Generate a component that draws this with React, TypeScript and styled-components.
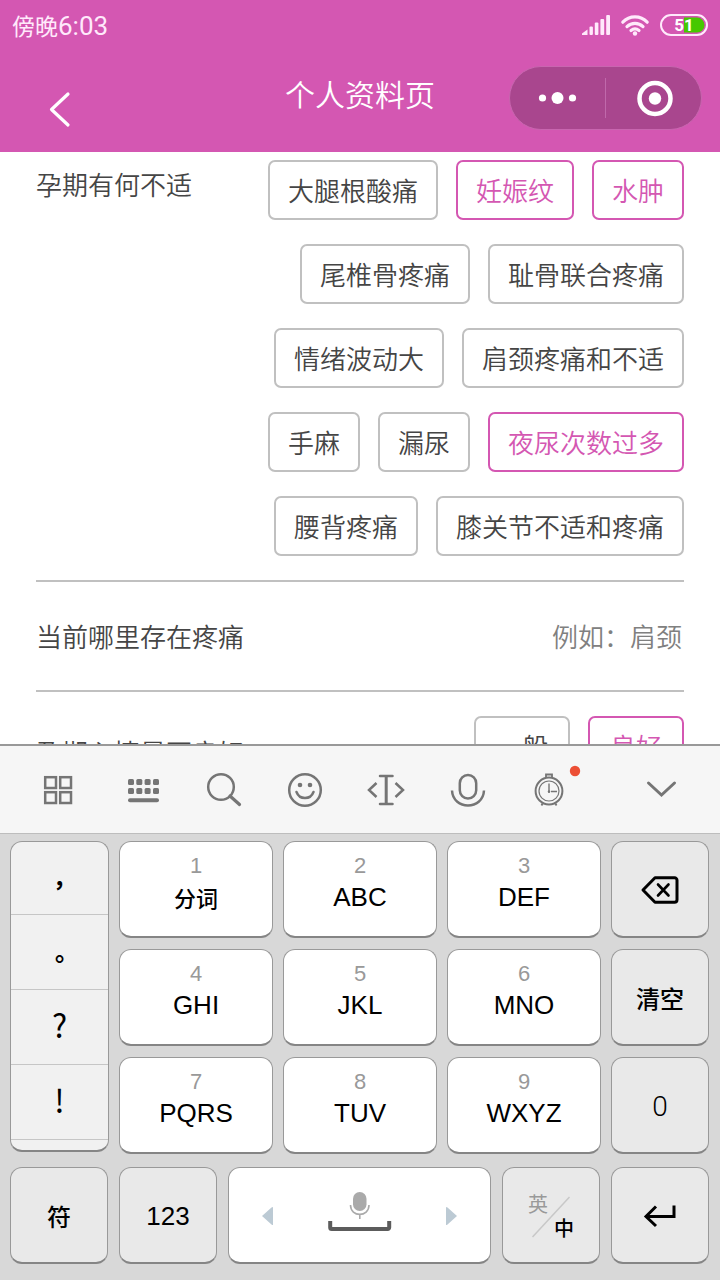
import React, { useState } from "react";
import styled, { createGlobalStyle, css } from "styled-components";

const PINK = "#d457b2";
const CJK = `"Noto Sans CJK SC", sans-serif`;

const GlobalStyle = createGlobalStyle`
  * { box-sizing: border-box; }
  body { margin: 0; background: #fff; font-family: ${CJK}; }
  button { font: inherit; color: inherit; margin: 0; padding: 0; border: 0; background: none; cursor: pointer; }
  svg { display: block; flex: none; overflow: visible; }
`;

const Screen = styled.div`
  display: flex;
  flex-direction: column;
  height: 100vh;
  overflow: hidden;
`;

/* ---------- header ---------- */

const Header = styled.header`
  flex: none;
  background: ${PINK};
  color: #fff;
`;

const StatusBar = styled.div`
  display: flex;
  align-items: center;
  justify-content: space-between;
  height: 52px;
  padding: 0 12px;
  color: #ffe9fb;
`;

const Clock = styled.span`
  padding-top: 2px;
  font-family: Roboto, ${CJK};
  font-size: 26px;
  line-height: 36px;
`;

const DayPart = styled.span`
  font-size: 23px;
`;

const StatusIcons = styled.div`
  display: flex;
  align-items: center;
  gap: 11px;
  padding-bottom: 2px;
`;

const Nav = styled.nav`
  display: grid;
  grid-template-columns: 1fr auto 1fr;
  align-items: start;
  height: 100px;
  padding: 14px 18px 0;
`;

const BackButton = styled.button`
  display: flex;
  align-items: center;
  justify-content: center;
  width: 84px;
  height: 86px;
`;

const Title = styled.h1`
  margin: 0;
  font-size: 30px;
  font-weight: 350;
  line-height: 54px;
`;

const Capsule = styled.div`
  display: flex;
  align-items: center;
  justify-self: end;
  width: 193px;
  height: 64px;
  border: 1px solid #c866af;
  border-radius: 32px;
  background: #a9468e;
`;

const CapsuleButton = styled.button`
  display: flex;
  flex: 1;
  align-items: center;
  justify-content: center;
  height: 100%;
`;

const CapsuleDivider = styled.span`
  width: 1px;
  height: 40px;
  background: #c069ab;
`;

/* ---------- form ---------- */

const Form = styled.main`
  flex: 1;
  min-height: 0;
  overflow: hidden;
  padding: 0 36px;
  color: #454545;
  font-size: 26px;
  font-weight: 350;
`;

const Section = styled.section<{ $top: number }>`
  display: flex;
  align-items: flex-start;
  justify-content: space-between;
  padding: ${(p) => p.$top}px 0 24px;
  border-bottom: 2px solid #c0c0c0;
`;

const Label = styled.h2<{ $top: number }>`
  flex: none;
  margin: 0;
  padding-top: ${(p) => p.$top}px;
  font-size: 26px;
  font-weight: 350;
  line-height: 36px;
`;

const ChipGroup = styled.div`
  display: flex;
  flex-direction: column;
  gap: 24px;
`;

const ChipRow = styled.div`
  display: flex;
  justify-content: flex-end;
  gap: 18px;
`;

const Chip = styled.button<{ $on: boolean; $wide?: boolean }>`
  height: 60px;
  padding: 0 ${(p) => (p.$wide ? 20 : 18)}px 2px;
  border: 2px solid ${(p) => (p.$on ? PINK : "#c0c0c0")};
  border-radius: 7px;
  background: #fff;
  color: ${(p) => (p.$on ? PINK : "#454545")};
  white-space: nowrap;
`;

const FieldRow = styled.div`
  display: flex;
  align-items: center;
  height: 110px;
  border-bottom: 2px solid #c0c0c0;
`;

const FieldLabel = styled.label`
  flex: none;
  line-height: 36px;
`;

const FieldInput = styled.input`
  flex: 1;
  min-width: 0;
  height: 60px;
  padding: 0 2px 2px 0;
  border: 0;
  outline: 0;
  background: none;
  font: inherit;
  color: #454545;
  text-align: right;
  &::placeholder { color: #808080; opacity: 1; }
`;

/* ---------- keyboard ---------- */

const Keyboard = styled.section`
  flex: none;
  border-top: 2px solid #999;
  background: #d8d8d8;
  color: #000;
`;

const Toolbar = styled.div`
  display: flex;
  height: 88px;
  padding: 0 18px;
  border-bottom: 1px solid #bdbdbd;
  background: #f6f6f6;
`;

const ToolButton = styled.button`
  display: flex;
  flex: 1;
  align-items: center;
  justify-content: center;
`;

const ToolbarGap = styled.span`
  width: 30px;
`;

const Keys = styled.div`
  display: grid;
  gap: 13px;
  padding: 7px 11px 16px 10px;
`;

const KeyGrid = styled.div`
  display: grid;
  grid-template-columns: 99px 1fr 1fr 1fr 98px;
  grid-auto-rows: 97px;
  gap: 11px 10px;
`;

const BottomRow = styled.div`
  display: flex;
  gap: 11px;
`;

const keyFace = css`
  border: 1px solid #999;
  border-bottom: 2px solid #858585;
  border-radius: 12px;
`;

const Key = styled.button<{ $tone?: "white" | "grey" }>`
  ${keyFace}
  display: flex;
  flex-direction: column;
  align-items: center;
  justify-content: center;
  height: 97px;
  padding-top: 2px;
  background: ${(p) => (p.$tone === "white" ? "#fff" : "#e9e9e9")};
  font-family: "Liberation Sans", ${CJK};
  font-size: 26px;
`;

const LetterKey = styled(Key)`
  padding: 0 0 10px;
`;

const FixedKey = styled(Key)`
  flex: none;
  width: 98px;
`;

const Digit = styled.span`
  color: #999;
  font-size: 22px;
  line-height: 26px;
`;

const Letters = styled.span`
  height: 36px;
  font-size: 26px;
  line-height: 36px;
`;

const HanText = styled.span<{ $size: number }>`
  font-family: ${CJK};
  font-size: ${(p) => p.$size}px;
  font-weight: 500;
  line-height: 36px;
`;

const Zero = styled.span`
  font-family: Roboto, sans-serif;
  font-size: 28px;
  font-weight: 300;
`;

const PunctuationList = styled.div`
  ${keyFace}
  grid-row: 1 / span 3;
  display: flex;
  flex-direction: column;
  height: 311px;
  overflow: hidden;
  background: #f1f1f1;
`;

const PunctuationKey = styled.button<{ $latin?: boolean }>`
  flex: none;
  height: 75px;
  padding: ${(p) => (p.$latin ? "0 0 6px" : "12px 0 0")};
  border-bottom: 1px solid #c6c6c6;
  font-family: "Noto Sans CJK TC", sans-serif;
  font-size: ${(p) => (p.$latin ? 32 : 24)}px;
  font-weight: ${(p) => (p.$latin ? 400 : 700)};
  line-height: 36px;
  &:first-child { height: 73px; }
`;

const SpaceKey = styled(Key)`
  flex: 1;
  flex-direction: row;
  justify-content: space-between;
  padding: 2px 32px 0;
`;

const LanguageKey = styled(FixedKey)`
  display: grid;
  grid-template-columns: 26px 26px;
  grid-template-rows: 24px 24px;
  align-content: center;
  justify-content: center;
  place-items: center;
  position: relative;
`;

const LanguageName = styled.span<{ $active?: boolean }>`
  grid-area: ${(p) => (p.$active ? "2 / 2" : "1 / 1")};
  color: ${(p) => (p.$active ? "#000" : "#999")};
  font-family: ${CJK};
  font-size: 20px;
  font-weight: ${(p) => (p.$active ? 500 : 400)};
  line-height: 24px;
`;

const LanguageSlash = styled.svg`
  position: absolute;
  top: 28px;
  left: 28px;
`;

/* ---------- icons ---------- */

const SignalIcon = () => (
  <svg width="28" height="20" viewBox="0 0 28 20" fill="currentColor">
    <path d="M0 20v-1.500L5.500 14.500V20z" />
    <rect x="7.500" y="11.500" width="3.400" height="8.500" rx="1" />
    <rect x="12.800" y="7.500" width="3.600" height="12.500" rx="1" />
    <rect x="18.400" y="4" width="3.800" height="16" rx="1" />
    <rect x="24.200" y="0" width="3.800" height="20" rx="1" />
  </svg>
);

const WifiIcon = () => (
  <svg width="28" height="21" viewBox="0 0 28 21" fill="none" stroke="currentColor" strokeWidth="3.200" strokeLinecap="round">
    <path d="M1.800 7.200C8.500.2 19.500.2 26.200 7.200" />
    <path d="M6 11.600c4.600-4.400 11.400-4.400 16 0" />
    <path d="M10 15.500c2.400-2 5.600-2 8 0" />
    <circle cx="14" cy="18.500" r="2.200" fill="currentColor" stroke="none" />
  </svg>
);

const BatteryIcon = () => (
  <svg width="48" height="22" viewBox="0 0 48 22">
    <path d="M24 3.500h13a7.500 7.500 0 0 1 0 15H24z" fill="#46c800" />
    <rect x="1" y="1" width="46" height="20" rx="10" fill="none" stroke="#ffe9fb" strokeWidth="2" />
    <text x="24" y="17" textAnchor="middle" fill="#fff" fontFamily="Roboto, sans-serif" fontSize="17" fontWeight="700">51</text>
  </svg>
);

const BackIcon = () => (
  <svg width="22" height="36" viewBox="0 0 22 36" fill="none" stroke="#fff" strokeWidth="3.200" strokeLinecap="round" strokeLinejoin="round">
    <path d="M19 3L2.500 18.500l16.500 15.500" />
  </svg>
);

const MoreIcon = () => (
  <svg width="38" height="14" viewBox="0 0 38 14" fill="#fff">
    <circle cx="3.500" cy="7" r="3.600" />
    <circle cx="18.500" cy="7" r="6" />
    <circle cx="33.500" cy="7" r="3.600" />
  </svg>
);

const TargetIcon = () => (
  <svg width="36" height="36" viewBox="0 0 36 36">
    <circle cx="19" cy="18.500" r="15.500" fill="none" stroke="#fff" strokeWidth="4.500" />
    <circle cx="19" cy="18.500" r="6.200" fill="#fff" />
  </svg>
);

const ToolSvg = ({ children }: { children: React.ReactNode }) => (
  <svg width="54" height="54" viewBox="0 0 54 54" fill="none" stroke="#757575" strokeWidth="2.500">
    {children}
  </svg>
);

const GridIcon = () => (
  <ToolSvg>
    <rect x="13.200" y="14.200" width="10.800" height="10.800" />
    <rect x="28.200" y="14.200" width="10.800" height="10.800" />
    <rect x="13.200" y="29.200" width="10.800" height="10.800" />
    <rect x="28.200" y="29.200" width="10.800" height="10.800" />
  </ToolSvg>
);

const KeyboardIcon = () => (
  <ToolSvg>
    {[16, 25].map((y) =>
      [14, 22.300, 30.600, 39].map((x) => (
        <rect key={`${x}-${y}`} x={x} y={y} width="6" height="6" rx="1.500" fill="#757575" stroke="none" />
      ))
    )}
    <path d="M16 37.200h27" strokeWidth="4" strokeLinecap="round" />
  </ToolSvg>
);

const SearchIcon = () => (
  <ToolSvg>
    <circle cx="26" cy="24" r="12.800" />
    <path d="M35 33l9.500 8.500" strokeWidth="3.200" strokeLinecap="round" />
  </ToolSvg>
);

const SmileIcon = () => (
  <ToolSvg>
    <circle cx="28" cy="27" r="15.800" />
    <circle cx="23" cy="22" r="2.300" fill="#757575" stroke="none" />
    <circle cx="33" cy="22" r="2.300" fill="#757575" stroke="none" />
    <path d="M19.500 29c3 8 14 8 17 0" strokeLinecap="round" />
  </ToolSvg>
);

const CursorIcon = () => (
  <ToolSvg>
    <path d="M21 13h12.500M21 41h12.500" strokeLinecap="round" />
    <path d="M27.200 13v28" strokeWidth="3" />
    <path d="M17.500 20l-7.500 7 7.500 7M36.500 20l7.500 7-7.500 7" />
  </ToolSvg>
);

const MicIcon = () => (
  <ToolSvg>
    <rect x="18.800" y="12" width="16.400" height="23.500" rx="8.200" />
    <path d="M11 27.500c1 20 31 20 32 0" />
  </ToolSvg>
);

const ClockIcon = () => (
  <ToolSvg>
    <circle cx="27" cy="28" r="13.400" strokeWidth="2" />
    <circle cx="27" cy="28" r="10" strokeWidth="1.200" />
    <path d="M24 14v-2.500h6V14M20.500 40.500L19.500 42.500M33.500 40.500L34.500 42.500" strokeWidth="1.800" />
    <path d="M27 20.500V30M29 28.500h6" strokeWidth="1.400" />
    <circle cx="27" cy="28.500" r="1.200" fill="#757575" stroke="none" />
    <circle cx="53" cy="8" r="5.200" fill="#ec4f35" stroke="none" />
  </ToolSvg>
);

const CollapseIcon = () => (
  <ToolSvg>
    <path d="M14.500 20L27.500 32 40.500 20" strokeWidth="3" strokeLinecap="round" />
  </ToolSvg>
);

const BackspaceIcon = () => (
  <svg width="38" height="28" viewBox="0 0 38 28" fill="none" stroke="#000" strokeWidth="3" strokeLinejoin="round" strokeLinecap="round">
    <path d="M14 1.800h19.500a2.500 2.500 0 0 1 2.500 2.500v19.400a2.500 2.500 0 0 1-2.500 2.500H14L2 14z" />
    <path d="M17 8.500l10.500 11M27.500 8.500L17 19.500" strokeWidth="2.600" />
  </svg>
);

const EnterIcon = () => (
  <svg width="32" height="24" viewBox="0 0 32 24" fill="none" stroke="#000" strokeWidth="3">
    <path d="M30 1.500v11H3" />
    <path d="M12 2.500l-10 10 10 9.500" />
  </svg>
);

const SpaceIcon = () => (
  <svg width="64" height="48" viewBox="0 0 64 48" fill="none">
    <rect x="25" y="0" width="13.500" height="19" rx="6.700" fill="#aaa" />
    <path d="M22.500 13c0 12.500 18.500 12.500 18.500 0M31.800 22.500v4.500" stroke="#aaa" strokeWidth="1.600" />
    <path d="M2.200 29v6.500a1.500 1.500 0 0 0 1.500 1.500h56a1.500 1.500 0 0 0 1.500-1.500V29" stroke="#5c5c5c" strokeWidth="4" />
  </svg>
);

const TriangleIcon = ({ right }: { right?: boolean }) => (
  <svg width="13" height="20" viewBox="0 0 13 20" fill="#bccad4">
    <path d={right ? "M1 1.500q0-1 1.500 0L12 10 2.500 18.500q-1.500 1-1.500 0z" : "M12 1.500q0-1-1.500 0L1 10l9.500 8.500q1.500 1 1.500 0z"} />
  </svg>
);

/* ---------- data ---------- */

const symptomRows = [
  ["大腿根酸痛", "妊娠纹", "水肿"],
  ["尾椎骨疼痛", "耻骨联合疼痛"],
  ["情绪波动大", "肩颈疼痛和不适"],
  ["手麻", "漏尿", "夜尿次数过多"],
  ["腰背疼痛", "膝关节不适和疼痛"],
];

const letterKeys = [
  ["1", "分词"], ["2", "ABC"], ["3", "DEF"],
  ["4", "GHI"], ["5", "JKL"], ["6", "MNO"],
  ["7", "PQRS"], ["8", "TUV"], ["9", "WXYZ"],
];

const sideKeys = [
  <Key key="del" aria-label="删除"><BackspaceIcon /></Key>,
  <Key key="clear"><HanText $size={24}>清空</HanText></Key>,
  <Key key="zero"><Zero>0</Zero></Key>,
];

const tools: [string, React.FC][] = [
  ["菜单", GridIcon],
  ["键盘", KeyboardIcon],
  ["搜索", SearchIcon],
  ["表情", SmileIcon],
  ["光标", CursorIcon],
  ["语音", MicIcon],
  ["历史", ClockIcon],
];

export default function App() {
  const [symptoms, setSymptoms] = useState(["妊娠纹", "水肿", "夜尿次数过多"]);
  const [mood, setMood] = useState("良好");
  const [pain, setPain] = useState("");

  const toggle = (name: string) =>
    setSymptoms((list) => (list.includes(name) ? list.filter((s) => s !== name) : [...list, name]));

  return (
    <Screen>
      <GlobalStyle />
      <Header>
        <StatusBar>
          <Clock><DayPart>傍晚</DayPart>6:03</Clock>
          <StatusIcons>
            <SignalIcon />
            <WifiIcon />
            <BatteryIcon />
          </StatusIcons>
        </StatusBar>
        <Nav>
          <BackButton aria-label="返回"><BackIcon /></BackButton>
          <Title>个人资料页</Title>
          <Capsule>
            <CapsuleButton aria-label="更多"><MoreIcon /></CapsuleButton>
            <CapsuleDivider />
            <CapsuleButton aria-label="关闭"><TargetIcon /></CapsuleButton>
          </Capsule>
        </Nav>
      </Header>

      <Form>
        <Section $top={8}>
          <Label $top={6}>孕期有何不适</Label>
          <ChipGroup>
            {symptomRows.map((row) => (
              <ChipRow key={row[0]}>
                {row.map((name) => (
                  <Chip key={name} $on={symptoms.includes(name)} aria-pressed={symptoms.includes(name)} onClick={() => toggle(name)}>
                    {name}
                  </Chip>
                ))}
              </ChipRow>
            ))}
          </ChipGroup>
        </Section>
        <FieldRow>
          <FieldLabel htmlFor="pain">当前哪里存在疼痛</FieldLabel>
          <FieldInput id="pain" placeholder="例如：肩颈" value={pain} onChange={(e) => setPain(e.target.value)} />
        </FieldRow>
        <Section $top={24}>
          <Label $top={18}>孕期心情是否良好</Label>
          <ChipRow>
            {["一般", "良好"].map((name) => (
              <Chip key={name} $wide $on={mood === name} aria-pressed={mood === name} onClick={() => setMood(name)}>
                {name}
              </Chip>
            ))}
          </ChipRow>
        </Section>
      </Form>

      <Keyboard>
        <Toolbar>
          {tools.map(([name, Icon]) => (
            <ToolButton key={name} aria-label={name}><Icon /></ToolButton>
          ))}
          <ToolbarGap />
          <ToolButton aria-label="收起"><CollapseIcon /></ToolButton>
        </Toolbar>
        <Keys>
          <KeyGrid>
            <PunctuationList>
              {["，", "。", "?", "!"].map((mark) => (
                <PunctuationKey key={mark} $latin={mark === "?" || mark === "!"}>{mark}</PunctuationKey>
              ))}
            </PunctuationList>
            {letterKeys.map(([digit, text], i) => (
              <React.Fragment key={digit}>
                <LetterKey $tone="white">
                  <Digit>{digit}</Digit>
                  {i === 0 ? <HanText $size={22}>{text}</HanText> : <Letters>{text}</Letters>}
                </LetterKey>
                {i % 3 === 2 && sideKeys[(i - 2) / 3]}
              </React.Fragment>
            ))}
          </KeyGrid>
          <BottomRow>
            <FixedKey><HanText $size={24}>符</HanText></FixedKey>
            <FixedKey>123</FixedKey>
            <SpaceKey $tone="white" aria-label="空格">
              <TriangleIcon />
              <SpaceIcon />
              <TriangleIcon right />
            </SpaceKey>
            <LanguageKey aria-label="中英切换">
              <LanguageName>英</LanguageName>
              <LanguageName $active>中</LanguageName>
              <LanguageSlash width="40" height="42" viewBox="0 0 40 42" stroke="#c8c8c8" strokeWidth="1.500">
                <path d="M1.500 41L38.500 1" />
              </LanguageSlash>
            </LanguageKey>
            <FixedKey aria-label="换行"><EnterIcon /></FixedKey>
          </BottomRow>
        </Keys>
      </Keyboard>
    </Screen>
  );
}
